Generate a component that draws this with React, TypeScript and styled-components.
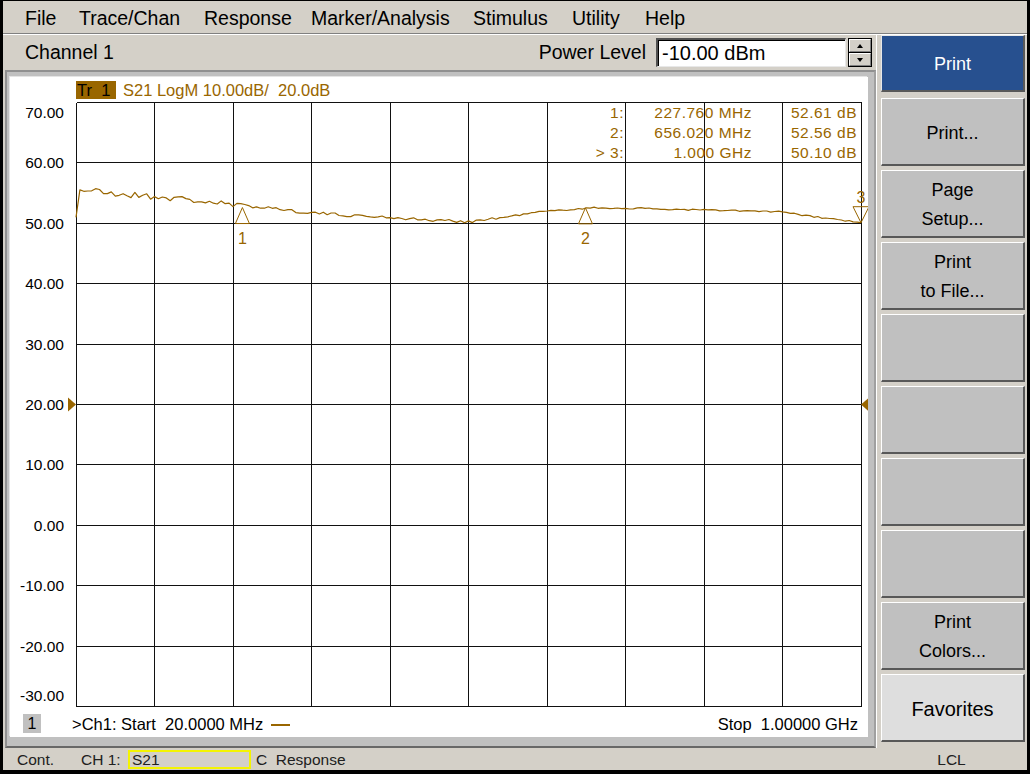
import React from 'react'
import styled, { createGlobalStyle, css } from 'styled-components'

const BROWN = '#996600'
const FACE = '#d4d0c8'
const FONT = '"Liberation Sans", Arial, sans-serif'

const GlobalStyle = createGlobalStyle`
  html, body {
    margin: 0;
    padding: 0;
    background: #000;
  }
  body {
    font-family: ${FONT};
    color: #000;
  }
`

// ---------- frame ----------
const Screen = styled.div`
  width: 1030px;
  height: 774px;
  box-sizing: border-box;
  background: #000;
  padding: 1px 3px 4px 3px;
  display: flex;
`

const Window = styled.div`
  flex: 1;
  min-width: 0;
  display: flex;
  flex-direction: column;
  background: ${FACE};
`

const MenuBar = styled.div`
  height: 33px;
  box-sizing: border-box;
  padding: 2px 0 0 22px;
  display: flex;
  align-items: center;
  border-bottom: 1px solid #808080;
  box-shadow: 0 1px 0 #fff;
  margin-bottom: 1px;
  font-size: 19.5px;
`

const MenuItem = styled.div<{ $w?: number }>`
  width: ${p => (p.$w ? `${p.$w}px` : 'auto')};
  white-space: nowrap;
`

const Body = styled.div`
  flex: 1;
  min-height: 0;
  display: flex;
`

const LeftCol = styled.div`
  flex: 1;
  min-width: 0;
  display: flex;
  flex-direction: column;
`

// ---------- channel bar ----------
const ChannelBar = styled.div`
  height: 35px;
  display: flex;
  align-items: center;
  padding: 0 4px 0 22px;
  font-size: 19.5px;
`

const Spacer = styled.div`
  flex: 1;
`

const FieldLabel = styled.div`
  margin-right: 10px;
`

const ValueInput = styled.div`
  box-sizing: border-box;
  width: 190px;
  height: 29px;
  background: #fff;
  border-top: 2px solid #505050;
  border-left: 2px solid #505050;
  border-right: 1px solid #e8e8e8;
  border-bottom: 1px solid #e8e8e8;
  box-shadow: inset 1px 1px 0 #000;
  padding-left: 4px;
  font-size: 20px;
  line-height: 26px;
`

const Spinner = styled.div`
  box-sizing: border-box;
  width: 24px;
  height: 29px;
  margin-left: 2px;
  display: flex;
  flex-direction: column;
  background: #000;
  padding: 1px;
  gap: 1px;
`

const SpinButton = styled.div<{ $dir: 'up' | 'down' }>`
  flex: 1;
  box-sizing: border-box;
  background: ${FACE};
  border-top: 1px solid #fff;
  border-left: 1px solid #fff;
  border-right: 1px solid #808080;
  border-bottom: 1px solid #808080;
  display: flex;
  align-items: center;
  justify-content: center;
  &::after {
    content: '';
    width: 0;
    height: 0;
    border-left: 3.5px solid transparent;
    border-right: 3.5px solid transparent;
    ${p =>
      p.$dir === 'up'
        ? css`border-bottom: 4px solid #000;`
        : css`border-top: 4px solid #000;`}
  }
`

// ---------- chart ----------
const ChartFrame = styled.div`
  flex: 1;
  min-height: 0;
  box-sizing: border-box;
  margin-left: 2px;
  background: #c0c0c0;
  border-top: 2px solid #909090;
  border-left: 2px solid #909090;
  border-right: 2px solid #a0a0a0;
  border-bottom: 2px solid #686868;
  padding: 5px 6px 9px 3px;
  display: flex;
`

const ChartPanel = styled.div`
  flex: 1;
  display: flex;
  flex-direction: column;
  background: #fff;
  box-shadow: -1px -1px 0 #e4e4e4;
`

const ChartHeader = styled.div`
  height: 23px;
  box-sizing: border-box;
  display: flex;
  align-items: flex-end;
  padding: 0 0 1px 66px;
  font-size: 16.5px;
`

const TraceTag = styled.div`
  width: 40px;
  height: 18px;
  box-sizing: border-box;
  padding-left: 1px;
  background: ${BROWN};
  color: #000;
  line-height: 18px;
  white-space: pre;
`

const TraceInfo = styled.div`
  margin-left: 7px;
  color: ${BROWN};
  line-height: 18px;
  white-space: pre;
`

const PlotWrap = styled.div`
  position: relative;
  height: 610px;
`

const PlotSvg = styled.svg`
  display: block;
`

const AxisLabel = styled.text`
  font-family: ${FONT};
  font-size: 15.5px;
  fill: #000;
`

const MarkerNum = styled.text`
  font-family: ${FONT};
  font-size: 16px;
  fill: ${BROWN};
`

const MarkerTable = styled.div`
  position: absolute;
  top: 3px;
  right: 11px;
  display: grid;
  grid-template-columns: 50px 128px 105px;
  grid-auto-rows: 20px;
  color: ${BROWN};
  font-size: 15.5px;
  line-height: 20px;
  letter-spacing: 0.5px;
  text-align: right;
  white-space: pre;
`

const ChartFooter = styled.div`
  flex: 1;
  display: flex;
  align-items: center;
  padding: 2px 10px 0 13px;
  font-size: 16.5px;
`

const ChannelTag = styled.div`
  width: 18px;
  height: 19px;
  margin-top: -3px;
  background: #c0c0c0;
  text-align: center;
  line-height: 19px;
  font-size: 16px;
`

const StartText = styled.div`
  margin-left: 31px;
  white-space: pre;
`

const LegendLine = styled.div`
  width: 19px;
  height: 2px;
  margin-left: 8px;
  background: ${BROWN};
`

const StopText = styled.div`
  white-space: pre;
`

// ---------- softkeys ----------
const SoftPanel = styled.div`
  width: 151px;
  box-sizing: border-box;
  border-left: 1px solid #fff;
  padding: 0 2px 0 4px;
  display: flex;
  flex-direction: column;
`

const SoftKey = styled.div<{ $variant?: 'active' | 'fav' }>`
  box-sizing: border-box;
  height: 68px;
  margin-top: 4px;
  padding-top: 3px;
  display: flex;
  flex-direction: column;
  align-items: center;
  justify-content: center;
  background: #c0c0c0;
  border-top: 1px solid #fff;
  border-left: 1px solid #fff;
  border-right: 2px solid #585858;
  border-bottom: 2px solid #585858;
  font-size: 18px;
  line-height: 29px;
  color: #000;
  ${p =>
    p.$variant === 'active' &&
    css`
      height: 57px;
      margin-top: 0;
      margin-bottom: 2px;
      background: #27508f;
      color: #fff;
      border-top-color: #e8e8e8;
      border-left-color: #e8e8e8;
    `}
  ${p =>
    p.$variant === 'fav' &&
    css`
      background: #dedede;
      font-size: 20px;
    `}
`

// ---------- status bar ----------
const StatusBar = styled.div`
  height: 22px;
  box-sizing: border-box;
  padding: 1px 0 0 14px;
  display: flex;
  align-items: center;
  font-size: 15.5px;
  color: #202020;
`

const StatusCell = styled.div<{ $w?: number }>`
  width: ${p => (p.$w ? `${p.$w}px` : 'auto')};
  white-space: pre;
`

const ActiveMeas = styled.div`
  box-sizing: border-box;
  width: 123px;
  height: 19px;
  border: 2px solid #f4f400;
  padding-left: 2px;
  line-height: 15px;
`

const ResponseCell = styled.div`
  margin-left: 5px;
  white-space: pre;
`

const LclCell = styled.div`
  width: 151px;
  text-align: center;
`

// ---------- data ----------
const X0 = 66
const X1 = 851
const Y0 = 2.5
const DIV_X = (X1 - X0) / 10
const DIV_Y = 60.4

const dbToY = (db: number) => Y0 + ((70 - db) * DIV_Y) / 10
const fToX = (mhz: number) => X0 + ((mhz - 20) / 980) * (X1 - X0)

// trace shape, page x -> dB
const KNOTS: [number, number][] = [
  [76, 55.4], [80, 55.6], [92, 55.4], [110, 54.9], [150, 54.5], [200, 53.7],
  [241, 52.8], [265, 52.7], [300, 51.9], [340, 51.4], [390, 51.0], [430, 50.5],
  [470, 50.3], [500, 50.9], [540, 51.9], [590, 52.55], [627, 52.5], [705, 52.2],
  [780, 51.9], [813, 51.1], [843, 50.5], [861, 50.1],
]

function rng(seed: number) {
  let a = seed
  return () => {
    a |= 0
    a = (a + 0x6d2b79f5) | 0
    let t = Math.imul(a ^ (a >>> 15), 1 | a)
    t = (t + Math.imul(t ^ (t >>> 7), 61 | t)) ^ t
    return ((t ^ (t >>> 14)) >>> 0) / 4294967296
  }
}

function baseDb(px: number) {
  for (let i = 1; i < KNOTS.length; i++) {
    const [xa, ya] = KNOTS[i - 1]
    const [xb, yb] = KNOTS[i]
    if (px <= xb) return ya + ((px - xa) / (xb - xa)) * (yb - ya)
  }
  return KNOTS[KNOTS.length - 1][1]
}

function buildTrace() {
  const rand = rng(21)
  const pts: string[] = []
  const n = 201
  for (let i = 0; i < n; i++) {
    const x = X0 + (i * (X1 - X0)) / (n - 1)
    const px = x + 10
    const amp = px < 250 ? 0.55 : px < 500 ? 0.25 : 0.14
    let db = baseDb(px) + (rand() * 2 - 1) * amp
    if (i === 0) db = 51.0
    if (i === n - 1) db = 50.1
    pts.push(`${x.toFixed(1)},${dbToY(db).toFixed(1)}`)
  }
  return 'M' + pts.join(' L')
}

const TRACE = buildTrace()

const Y_LABELS = ['70.00', '60.00', '50.00', '40.00', '30.00', '20.00', '10.00', '0.00', '-10.00', '-20.00', '-30.00']

const MARKERS = [
  { n: '1', mhz: 227.76, db: 52.61, freq: '227.760 MHz', val: '52.61 dB', active: false },
  { n: '2', mhz: 656.02, db: 52.56, freq: '656.020 MHz', val: '52.56 dB', active: false },
  { n: '3', mhz: 1000, db: 50.1, freq: '1.000 GHz', val: '50.10 dB', active: true },
]

const MENU: [string, number?][] = [
  ['File', 54], ['Trace/Chan', 125], ['Response', 107], ['Marker/Analysis', 162],
  ['Stimulus', 99], ['Utility', 73], ['Help'],
]

const SOFTKEYS: { lines: string[]; variant?: 'active' | 'fav' }[] = [
  { lines: ['Print'], variant: 'active' },
  { lines: ['Print...'] },
  { lines: ['Page', 'Setup...'] },
  { lines: ['Print', 'to File...'] },
  { lines: [] },
  { lines: [] },
  { lines: [] },
  { lines: [] },
  { lines: ['Print', 'Colors...'] },
  { lines: ['Favorites'], variant: 'fav' },
]

const crisp = (v: number) => Math.floor(v) + 0.5

const Plot = () => {
  const refY = crisp(dbToY(20))
  return (
    <PlotSvg width={858} height={610} viewBox="0 0 858 610">
      {Array.from({ length: 11 }, (_, k) => (
        <line key={'v' + k} x1={crisp(X0 + k * DIV_X)} x2={crisp(X0 + k * DIV_X)} y1={crisp(Y0)} y2={crisp(Y0 + 10 * DIV_Y)} stroke="#111" strokeWidth={1} shapeRendering="crispEdges" />
      ))}
      {Array.from({ length: 11 }, (_, k) => (
        <line key={'h' + k} x1={crisp(X0)} x2={crisp(X1)} y1={crisp(Y0 + k * DIV_Y)} y2={crisp(Y0 + k * DIV_Y)} stroke="#111" strokeWidth={1} shapeRendering="crispEdges" />
      ))}
      {Y_LABELS.map((t, k) => {
        const cy = k === 0 ? 12 : k === 10 ? 595 : Y0 + k * DIV_Y
        return (
          <AxisLabel key={t} x={54} y={cy + 5.5} textAnchor="end">
            {t}
          </AxisLabel>
        )
      })}
      <polygon points={`${X0 - 8},${refY - 7} ${X0},${refY} ${X0 - 8},${refY + 7}`} fill={BROWN} />
      <polygon points={`${X1 + 8},${refY - 7} ${X1},${refY} ${X1 + 8},${refY + 7}`} fill={BROWN} />
      <path d={TRACE} fill="none" stroke={BROWN} strokeWidth={1.2} strokeLinejoin="round" />
      {MARKERS.map(m => {
        const mx = fToX(m.mhz)
        const my = dbToY(m.db)
        return m.active ? (
          <g key={m.n}>
            <polygon points={`${mx},${my} ${mx - 8},${my - 16} ${mx + 8},${my - 16}`} fill="none" stroke={BROWN} strokeWidth={1} />
            <MarkerNum x={mx} y={my - 20} textAnchor="middle">{m.n}</MarkerNum>
          </g>
        ) : (
          <g key={m.n}>
            <polygon points={`${mx},${my} ${mx - 7},${my + 16} ${mx + 7},${my + 16}`} fill="none" stroke={BROWN} strokeWidth={1} />
            <MarkerNum x={mx} y={my + 36} textAnchor="middle">{m.n}</MarkerNum>
          </g>
        )
      })}
    </PlotSvg>
  )
}

export default function App() {
  return (
    <>
      <GlobalStyle />
      <Screen>
        <Window>
          <MenuBar>
            {MENU.map(([label, w]) => (
              <MenuItem key={label} $w={w}>{label}</MenuItem>
            ))}
          </MenuBar>
          <Body>
            <LeftCol>
              <ChannelBar>
                <div>Channel 1</div>
                <Spacer />
                <FieldLabel>Power Level</FieldLabel>
                <ValueInput>-10.00 dBm</ValueInput>
                <Spinner>
                  <SpinButton $dir="up" />
                  <SpinButton $dir="down" />
                </Spinner>
              </ChannelBar>
              <ChartFrame>
                <ChartPanel>
                  <ChartHeader>
                    <TraceTag>{'Tr  1'}</TraceTag>
                    <TraceInfo>{'S21 LogM 10.00dB/  20.0dB'}</TraceInfo>
                  </ChartHeader>
                  <PlotWrap>
                    <Plot />
                    <MarkerTable>
                      {MARKERS.map(m => (
                        <React.Fragment key={m.n}>
                          <div>{(m.active ? '> ' : '') + m.n + ':'}</div>
                          <div>{m.freq}</div>
                          <div>{m.val}</div>
                        </React.Fragment>
                      ))}
                    </MarkerTable>
                  </PlotWrap>
                  <ChartFooter>
                    <ChannelTag>1</ChannelTag>
                    <StartText>{'>Ch1: Start  20.0000 MHz'}</StartText>
                    <LegendLine />
                    <Spacer />
                    <StopText>{'Stop  1.00000 GHz'}</StopText>
                  </ChartFooter>
                </ChartPanel>
              </ChartFrame>
            </LeftCol>
            <SoftPanel>
              {SOFTKEYS.map((k, i) => (
                <SoftKey key={i} $variant={k.variant}>
                  {k.lines.map(l => (
                    <div key={l}>{l}</div>
                  ))}
                </SoftKey>
              ))}
            </SoftPanel>
          </Body>
          <StatusBar>
            <StatusCell $w={64}>Cont.</StatusCell>
            <StatusCell $w={47}>CH 1:</StatusCell>
            <ActiveMeas>S21</ActiveMeas>
            <ResponseCell>{'C  Response'}</ResponseCell>
            <Spacer />
            <LclCell>LCL</LclCell>
          </StatusBar>
        </Window>
      </Screen>
    </>
  )
}
